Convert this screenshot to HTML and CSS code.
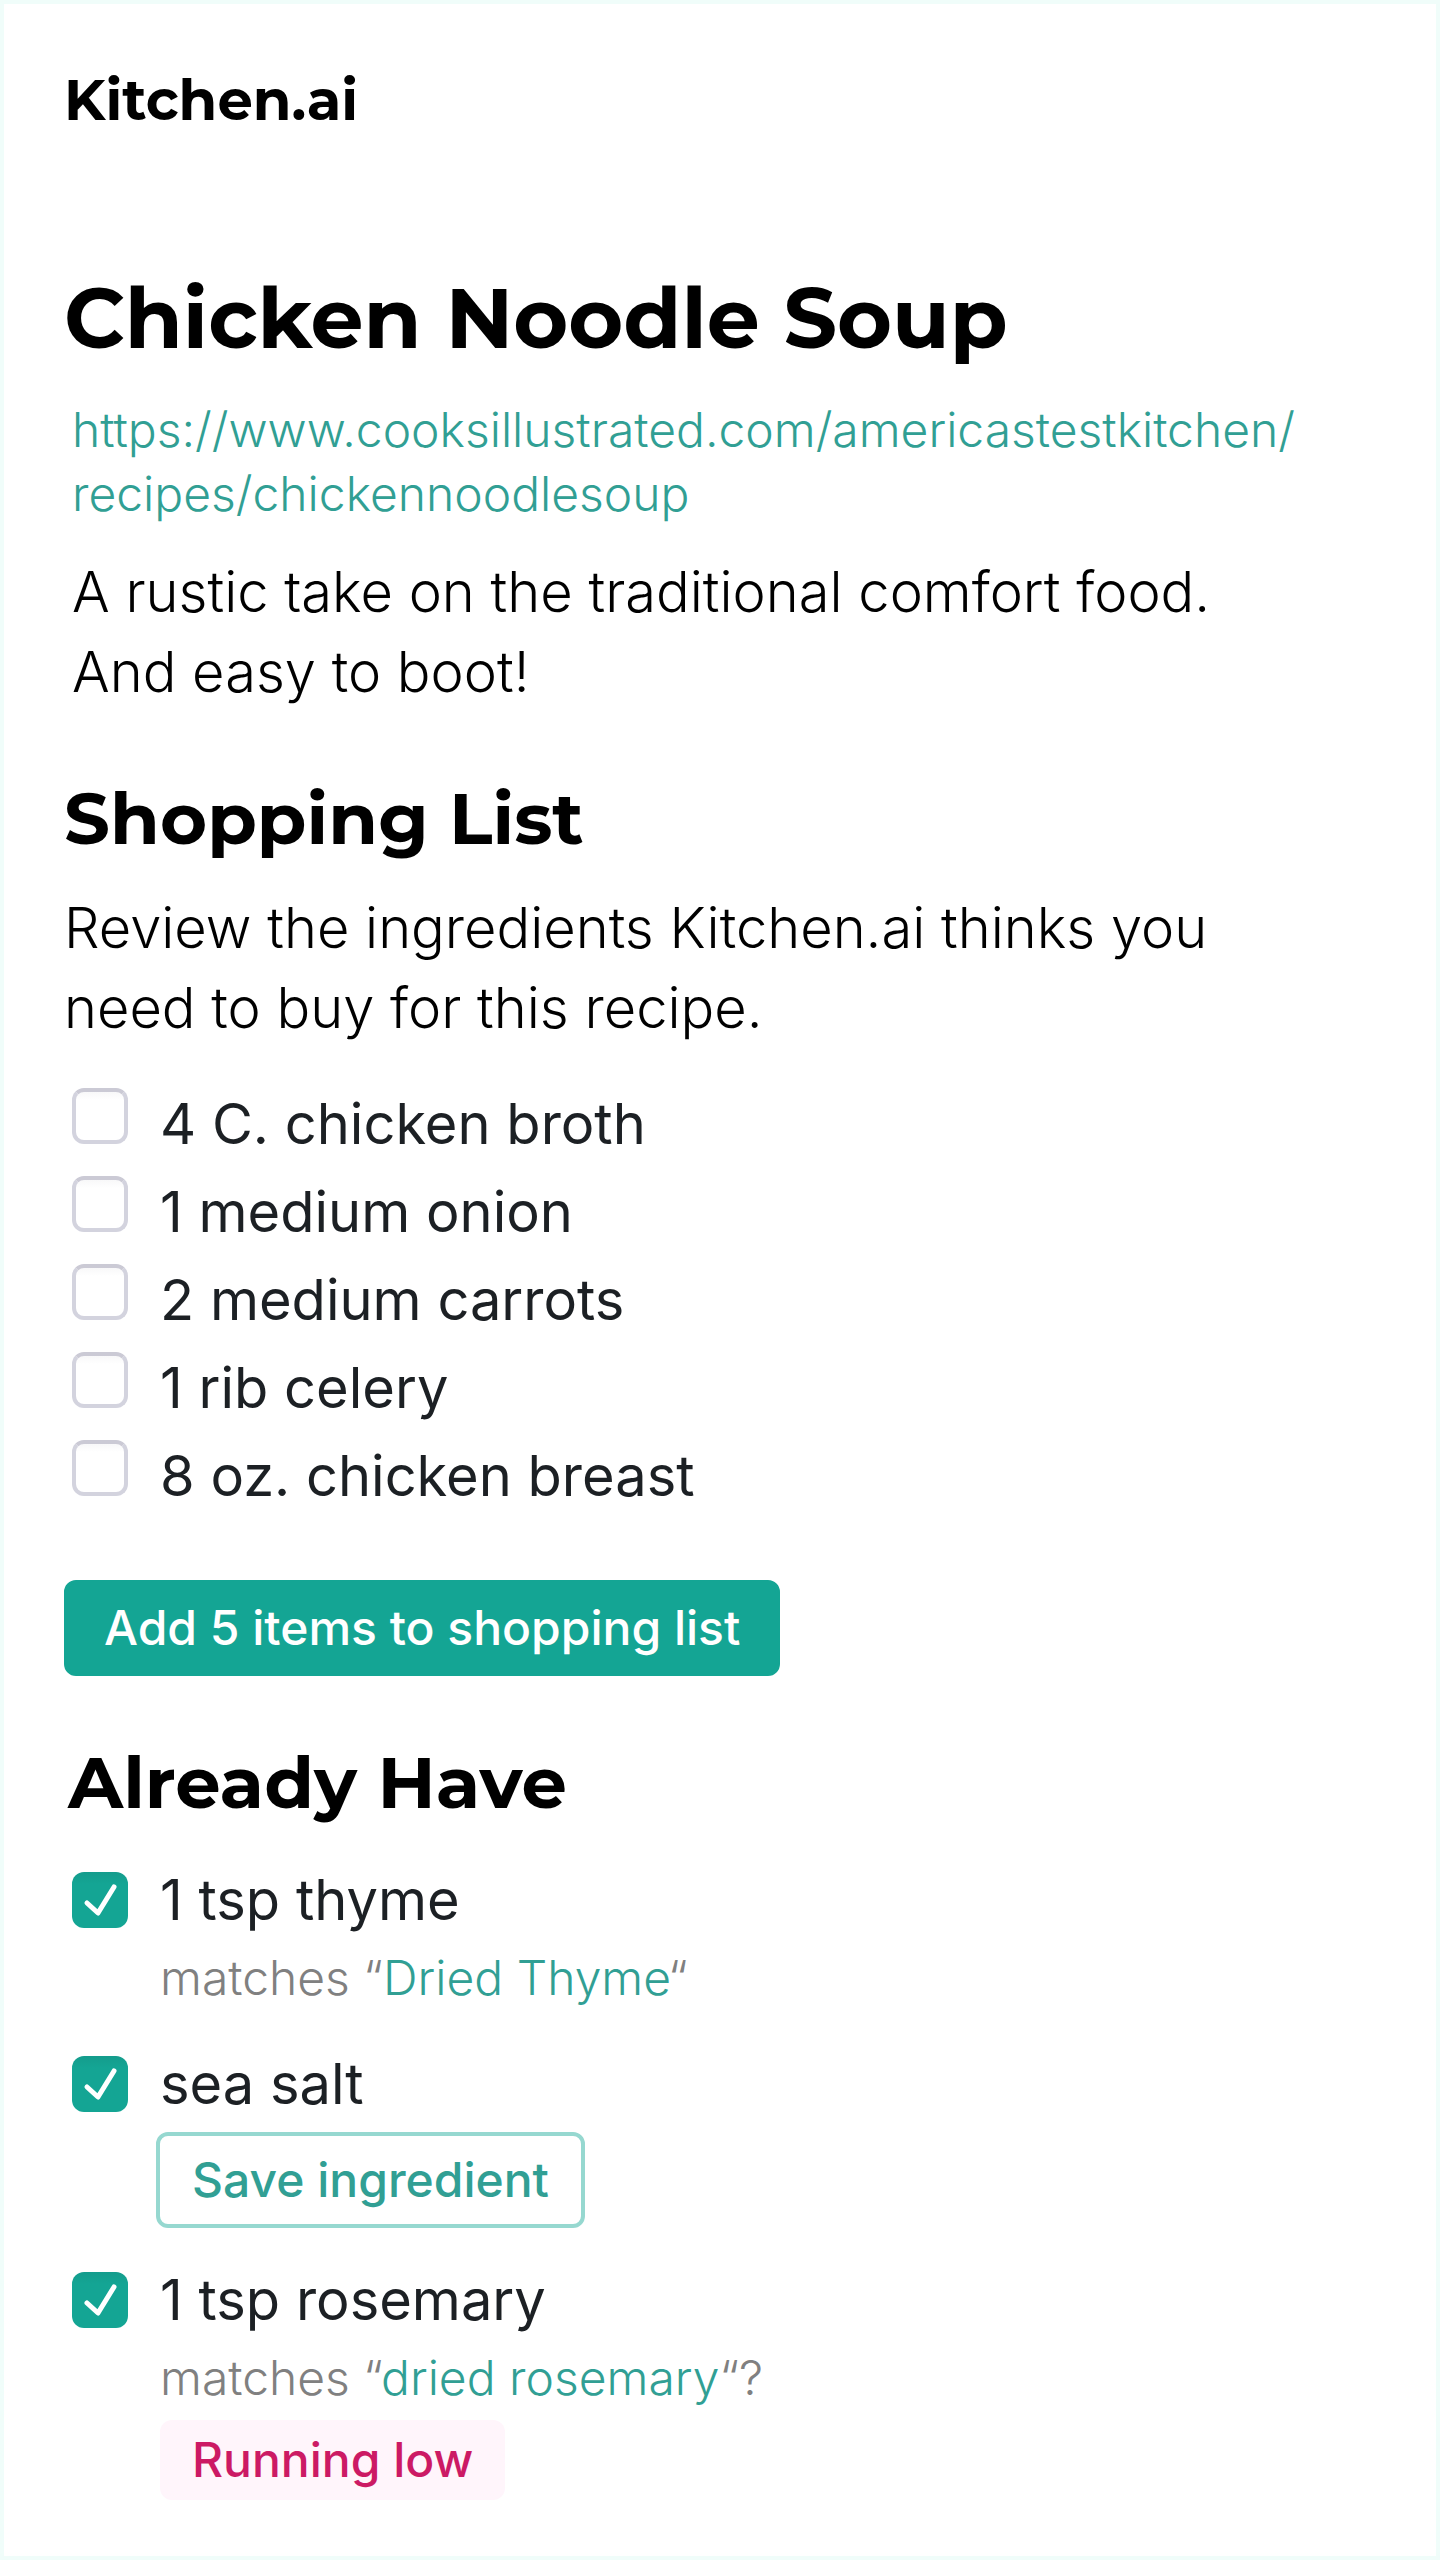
FILE: index.html
```
<!DOCTYPE html>
<html lang="en">
<head>
<meta charset="utf-8">
<meta name="viewport" content="width=device-width, initial-scale=1">
<title>Kitchen.ai</title>
<link rel="stylesheet" href="styles.css">
</head>
<body>
<div class="page">
  <header class="brand">Kitchen.ai</header>
  <main>
    <h1>Chicken Noodle Soup</h1>
    <a class="source" href="https://www.cooksillustrated.com/americastestkitchen/recipes/chickennoodlesoup">https://www.cooksillustrated.com/americastestkitchen/<br>recipes/chickennoodlesoup</a>
    <p class="lead summary">A rustic take on the traditional comfort food.<br>And easy to boot!</p>
    <section>
      <h2>Shopping List</h2>
      <p class="lead">Review the ingredients Kitchen.ai thinks you<br>need to buy for this recipe.</p>
      <ul class="shopping">
        <li><label class="item"><input type="checkbox"><span>4 C. chicken broth</span></label></li>
        <li><label class="item"><input type="checkbox"><span>1 medium onion</span></label></li>
        <li><label class="item"><input type="checkbox"><span>2 medium carrots</span></label></li>
        <li><label class="item"><input type="checkbox"><span>1 rib celery</span></label></li>
        <li><label class="item"><input type="checkbox"><span>8 oz. chicken breast</span></label></li>
      </ul>
      <button class="button primary" type="button">Add 5 items to shopping list</button>
    </section>
    <section>
      <h2 class="have-title">Already Have</h2>
      <ul class="have">
        <li>
          <label class="item"><span class="box"><input type="checkbox" checked><svg class="tick" viewBox="0 0 56 56" aria-hidden="true"><path d="M15 31L26 41L42 15"/></svg></span><span>1 tsp thyme</span></label>
          <p class="match">matches “<a href="#thyme">Dried Thyme</a>“</p>
        </li>
        <li>
          <label class="item"><span class="box"><input type="checkbox" checked><svg class="tick" viewBox="0 0 56 56" aria-hidden="true"><path d="M15 31L26 41L42 15"/></svg></span><span>sea salt</span></label>
          <button class="button outline" type="button">Save ingredient</button>
        </li>
        <li>
          <label class="item"><span class="box"><input type="checkbox" checked><svg class="tick" viewBox="0 0 56 56" aria-hidden="true"><path d="M15 31L26 41L42 15"/></svg></span><span>1 tsp rosemary</span></label>
          <p class="match">matches “<a href="#rosemary">dried rosemary</a>“?</p>
          <span class="tag">Running low</span>
        </li>
      </ul>
    </section>
  </main>
</div>
</body>
</html>
```
FILE: styles.css
```
* {
  box-sizing: border-box;
}

body {
  margin: 0;
  background: #fff;
  color: #000;
  font-family: Inter, "Noto Sans", sans-serif;
}

.page {
  min-height: 100vh;
  padding: 60px 60px 56px;
  border: 4px solid #f0fdfa;
}

.brand,
h1,
h2 {
  margin: 0;
  font-family: Montserrat, Inter, sans-serif;
  font-weight: 700;
}

.brand {
  font-size: 56px;
  line-height: 72px;
}

h1 {
  margin-top: 126px;
  font-size: 84px;
  line-height: 112px;
}

h2 {
  margin-top: 58px;
  font-size: 72px;
  line-height: 96px;
}

.have-title {
  padding-left: 4px;
}

.source {
  display: block;
  margin-top: 24px;
  padding-left: 8px;
  color: #319f94;
  font-size: 48px;
  font-weight: 300;
  line-height: 64px;
  text-decoration: none;
}

.lead {
  margin: 22px 0 0;
  font-size: 56px;
  font-weight: 300;
  line-height: 80px;
}

.summary {
  margin-top: 26px;
  padding-left: 8px;
}

ul {
  margin: 0;
  padding: 0 0 0 8px;
  list-style: none;
}

.shopping {
  margin-top: 32px;
}

.have {
  display: flex;
  flex-direction: column;
  gap: 28px;
  margin-top: 26px;
}

.item {
  display: flex;
  align-items: center;
  gap: 32px;
  color: #1c2024;
  font-size: 56px;
  line-height: 88px;
}

.shopping .item {
  align-items: flex-start;
}

.shopping input {
  margin-top: 8px;
}

input {
  appearance: none;
  flex: none;
  width: 56px;
  height: 56px;
  margin: 0;
  border: 4px solid #d3d3de;
  border-top-color: #cbcad5;
  border-radius: 12px;
  background: linear-gradient(#f8f8f9, #fff 8px) no-repeat;
}

input:checked {
  border: 0;
  background: linear-gradient(#149c8c, #14a594 12px);
}

.box {
  display: grid;
}

.box > * {
  grid-area: 1 / 1;
}

.tick {
  width: 56px;
  height: 56px;
  fill: none;
  stroke: #fff;
  stroke-width: 5;
  stroke-linecap: round;
  stroke-linejoin: round;
  pointer-events: none;
}

.button {
  display: block;
  height: 96px;
  padding: 0 32px;
  border: 4px solid #14a594;
  border-radius: 12px;
  background: #14a594;
  color: #fff;
  font-family: inherit;
  font-size: 48px;
  font-weight: 500;
  line-height: 64px;
}

.primary {
  margin-top: 60px;
  padding: 0 36px;
}

.outline {
  margin: 4px 0 0 84px;
  border-color: #96d8d0;
  background: #fff;
  color: #319f94;
}

.match {
  margin: 0 0 0 88px;
  color: #808080;
  font-size: 48px;
  font-weight: 300;
  line-height: 68px;
}

.match a {
  color: #319f94;
  text-decoration: none;
}

.tag {
  display: block;
  width: fit-content;
  margin: 8px 0 0 88px;
  padding: 0 32px;
  border-radius: 12px;
  background: #fff5fb;
  color: #cc1a64;
  font-size: 48px;
  font-weight: 500;
  line-height: 80px;
}
```
